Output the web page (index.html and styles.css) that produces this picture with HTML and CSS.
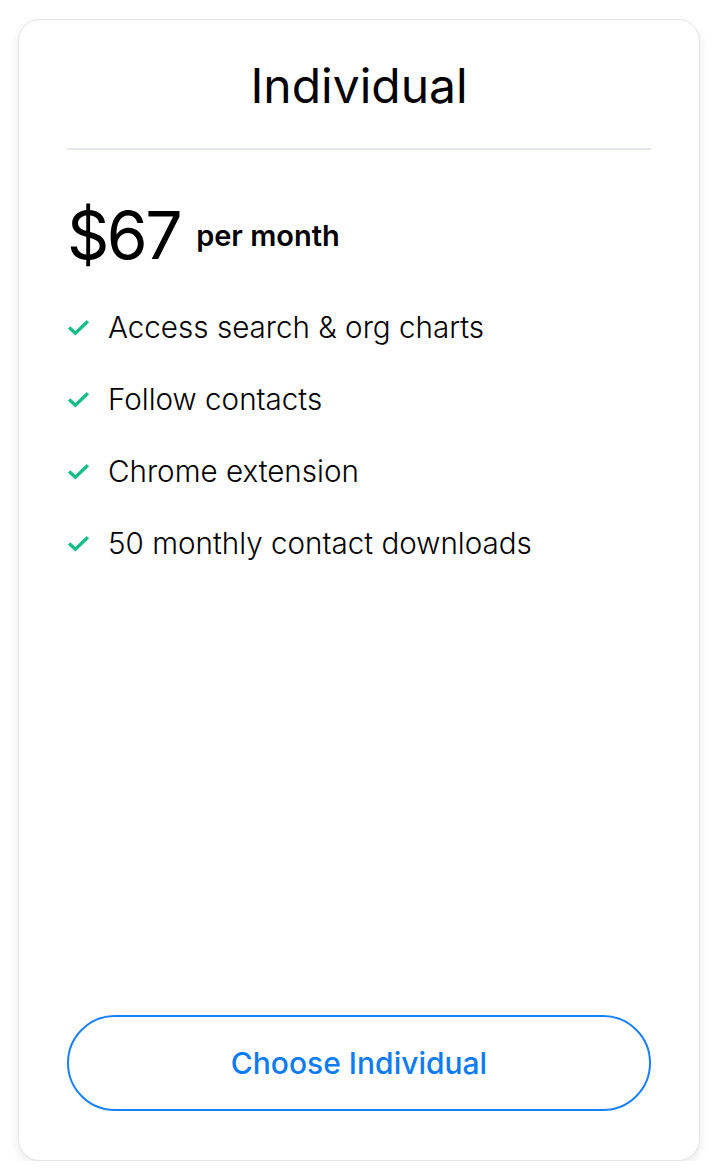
FILE: index.html
```html
<!DOCTYPE html>
<html>
<head>
    <title>Individual plan</title>
    <meta charset="utf-8">
    <meta name="viewport" content="width=device-width, initial-scale=1">
    <link rel="stylesheet" href="styles.css">
</head>
<body>
    <div class="card">
        <h2 class="title">Individual</h2>
        <div class="price">
            <span class="amount">$67</span>
            <span class="period">per month</span>
        </div>
        <ul class="features">
            <li><svg class="check" viewBox="0 0 22 16"><path d="M2 8l6 5.5L20 2"/></svg>Access search &amp; org charts</li>
            <li><svg class="check" viewBox="0 0 22 16"><path d="M2 8l6 5.5L20 2"/></svg>Follow contacts</li>
            <li><svg class="check" viewBox="0 0 22 16"><path d="M2 8l6 5.5L20 2"/></svg>Chrome extension</li>
            <li><svg class="check" viewBox="0 0 22 16"><path d="M2 8l6 5.5L20 2"/></svg>50 monthly contact downloads</li>
        </ul>
        <button class="choose">Choose Individual</button>
    </div>
</body>
</html>
```

FILE: styles.css
```css
body { margin: 0; background: #fff; font-family: Inter, "Noto Sans", sans-serif; color: #000; }
.card { box-sizing: border-box; width: 682px; height: 1142px; margin: 19px 0 0 18px; padding: 0 48px 49px; border: 1.5px solid #e2e5ea; border-radius: 22px; background: #fff; box-shadow: 0 4px 10px rgba(0,0,0,0.09); display: flex; flex-direction: column; }
.title { margin: 0; padding: 37px 0 33px; text-align: center; font-size: 48px; font-weight: 400; line-height: 58px; border-bottom: 2px solid #e3e6ea; }
.price { display: flex; align-items: center; gap: 16px; margin-top: 45px; }
.amount { font-size: 66px; line-height: 80px; letter-spacing: -2.5px; }
.period { font-size: 29px; font-weight: 600; }
.features { list-style: none; margin: 16px 0 0; padding: 0; }
.features li { display: flex; align-items: center; height: 72px; font-size: 29.6px; font-weight: 300; }
.check { width: 23px; height: 17px; margin-right: 18px; fill: none; stroke: #12bd87; stroke-width: 3.2; }
.choose { margin-top: auto; height: 96px; border: 2px solid #1a80f5; border-radius: 48px; background: #fff; color: #0b7cf3; font-family: inherit; font-size: 30px; font-weight: 500; }
```
